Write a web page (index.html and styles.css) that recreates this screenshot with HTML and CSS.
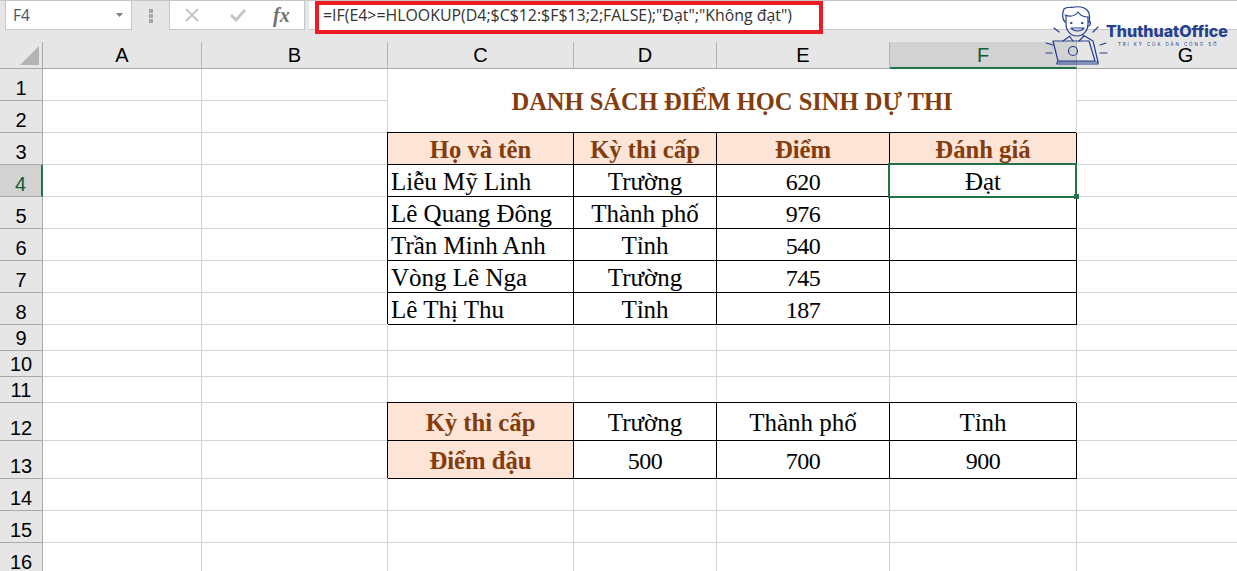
FILE: index.html
```html
<!DOCTYPE html>
<html lang="vi">
<head>
<meta charset="utf-8">
<title>Excel</title>
<link rel="stylesheet" href="styles.css">
</head>
<body>
<div class="app">
  <div class="toolbar">
    <div class="namebox"><span>F4</span><svg class="caret" width="7" height="4" viewBox="0 0 7 4"><path d="M0 0h7L3.5 4z" fill="#7f7f7f"/></svg></div>
    <div class="grip"><i></i><i></i><i></i></div>
    <div class="fnbox">
      <svg class="ic-x" width="14" height="14" viewBox="0 0 14 14"><path d="M1 1l12 12M13 1L1 13" stroke="#c4c4c4" stroke-width="1.8" fill="none"/></svg>
      <svg class="ic-ok" width="16" height="14" viewBox="0 0 16 14"><path d="M1 7l5 5L15 2" stroke="#c4c4c4" stroke-width="2.8" fill="none"/></svg>
      <span class="fx">fx</span>
    </div>
    <div class="formula"><div class="formula-text">=IF(E4&gt;=HLOOKUP(D4;$C$12:$F$13;2;FALSE);"Đạt";"Không đạt")</div></div>
  </div>
  <div class="sheet">
    <div class="corner"><svg width="19" height="19" viewBox="0 0 19 19"><path d="M19 0v19H0z" fill="#b4b4b4"/></svg></div>
    <div class="ch">A</div><div class="ch">B</div><div class="ch">C</div><div class="ch">D</div><div class="ch">E</div><div class="ch sel">F</div><div class="ch last">G</div>

    <div class="rh">1</div><div class="c"></div><div class="c"></div><div class="c title">DANH SÁCH ĐIỂM HỌC SINH DỰ THI</div><div class="c"></div>
    <div class="rh">2</div><div class="c"></div><div class="c"></div><div class="c"></div>

    <div class="rh">3</div><div class="c"></div><div class="c"></div><div class="c t h">Họ và tên</div><div class="c t h">Kỳ thi cấp</div><div class="c t h">Điểm</div><div class="c t h">Đánh giá</div><div class="c"></div>
    <div class="rh sel">4</div><div class="c"></div><div class="c"></div><div class="c t l">Liễu Mỹ Linh</div><div class="c t">Trường</div><div class="c t n">620</div><div class="c t active">Đạt<i class="handle"></i></div><div class="c"></div>
    <div class="rh">5</div><div class="c"></div><div class="c"></div><div class="c t l">Lê Quang Đông</div><div class="c t">Thành phố</div><div class="c t n">976</div><div class="c t"></div><div class="c"></div>
    <div class="rh">6</div><div class="c"></div><div class="c"></div><div class="c t l">Trần Minh Anh</div><div class="c t">Tỉnh</div><div class="c t n">540</div><div class="c t"></div><div class="c"></div>
    <div class="rh">7</div><div class="c"></div><div class="c"></div><div class="c t l">Vòng Lê Nga</div><div class="c t">Trường</div><div class="c t n">745</div><div class="c t"></div><div class="c"></div>
    <div class="rh">8</div><div class="c"></div><div class="c"></div><div class="c t l">Lê Thị Thu</div><div class="c t">Tỉnh</div><div class="c t n">187</div><div class="c t"></div><div class="c"></div>
    <div class="rh">9</div><div class="c"></div><div class="c"></div><div class="c"></div><div class="c"></div><div class="c"></div><div class="c"></div><div class="c"></div>
    <div class="rh">10</div><div class="c"></div><div class="c"></div><div class="c"></div><div class="c"></div><div class="c"></div><div class="c"></div><div class="c"></div>
    <div class="rh">11</div><div class="c"></div><div class="c"></div><div class="c"></div><div class="c"></div><div class="c"></div><div class="c"></div><div class="c"></div>
    <div class="rh">12</div><div class="c"></div><div class="c"></div><div class="c t h tall">Kỳ thi cấp</div><div class="c t tall">Trường</div><div class="c t tall">Thành phố</div><div class="c t tall">Tỉnh</div><div class="c"></div>
    <div class="rh">13</div><div class="c"></div><div class="c"></div><div class="c t h tall">Điểm đậu</div><div class="c t n tall">500</div><div class="c t n tall">700</div><div class="c t n tall">900</div><div class="c"></div>
    <div class="rh">14</div><div class="c"></div><div class="c"></div><div class="c"></div><div class="c"></div><div class="c"></div><div class="c"></div><div class="c"></div>
    <div class="rh">15</div><div class="c"></div><div class="c"></div><div class="c"></div><div class="c"></div><div class="c"></div><div class="c"></div><div class="c"></div>
    <div class="rh">16</div><div class="c"></div><div class="c"></div><div class="c"></div><div class="c"></div><div class="c"></div><div class="c"></div><div class="c"></div>
  </div>
  <div class="logo">
    <svg class="logo-art" width="64" height="64" viewBox="0 0 64 64" fill="none" stroke="#24408e" stroke-width="1.2" stroke-linecap="round" stroke-linejoin="round">
      <path d="M21 19c-3-3-3-9-1-13 3-3 7-1 11-2 6-1 12 1 14 6 1 4 1 7 0 10"/>
      <path d="M21 12c5 2 10 1 13-3 2 3 6 5 10 5"/>
      <path d="M22 13v8c0 7 5 12 11 12s11-5 11-12v-7"/>
      <path d="M45 18c2 0 2 5-1 5"/>
      <path d="M27 25c3 4 10 4 13 0z"/>
      <path d="M27 20h.5M38 20h.5" stroke-width="2"/>
      <path d="M26 33l-7 5M39 32l10 6 5 21M26 34l3 4M40 33l-5 5"/>
      <path d="M9 38h36l6 20H14z"/>
      <path d="M13 59h41v2H13z"/>
      <circle cx="29" cy="48" r="4.500"/>
      <path d="M10 25l5 4M2 40l7 2M2 50h6M49 29l5-5M56 42l6-2M56 50h7"/>
    </svg>
    <div class="logo-name">ThuthuatOffice</div>
    <div class="logo-tag">TRI KỶ CỦA DÂN CÔNG SỞ</div>
  </div>
</div>
</body>
</html>
```
FILE: styles.css
```css
* { box-sizing: border-box; }
html, body { margin: 0; padding: 0; }
body { width: 1237px; height: 571px; overflow: hidden; background: #fff; }
.app { position: relative; width: 1237px; height: 571px; overflow: hidden; }

.toolbar { height: 42px; background: #e6e6e6; border-top: 1px solid #c6c6c6; display: flex; align-items: flex-start; }
.namebox { width: 127px; height: 29px; margin-left: 5px; background: #fff; border: 1px solid #c6c6c6; border-top: 0; display: flex; align-items: center; justify-content: space-between; padding: 0 8px 0 7px; font: 15.500px "Open Sans", sans-serif; color: #44546a; }
.grip { width: 37px; height: 29px; display: flex; flex-direction: column; align-items: center; justify-content: center; gap: 1px; }
.grip i { width: 4px; height: 4px; background: #a6a6a6; }
.fnbox { width: 136px; height: 29px; background: #fff; border: 1px solid #c6c6c6; border-top: 0; display: flex; align-items: center; padding-left: 15px; }
.ic-ok { margin-left: 31px; }
.fx { font: italic bold 20px/24px "Liberation Serif", serif; color: #707070; margin-left: 27px; }
.formula { flex: 1; height: 29px; margin-left: 4px; background: #fff; border-bottom: 1px solid #c6c6c6; }
.formula-text { width: 508px; height: 33px; margin-left: 6px; padding-left: 4px; background: #fff; border: 4px solid #ed1c24; font: 15.900px/21px "Open Sans", sans-serif; color: #333; white-space: nowrap; position: relative; z-index: 1; }

.sheet { display: grid; grid-template-columns: 43px 159px 186px 186px 143px 173px 187px 218px; grid-template-rows: 27px repeat(8, 32px) 26px 26px 26px 38px 38px 32px 32px 32px; width: 1295px; }
.corner { background: #e6e6e6; border-right: 1px solid #a9a9a9; border-bottom: 1px solid #a9a9a9; display: flex; align-items: flex-end; justify-content: flex-end; padding: 0 3px 3px 0; }
.ch { background: #e6e6e6; border-right: 1px solid #b4b4b4; border-bottom: 1px solid #a9a9a9; font: 20px/27px "Liberation Sans", sans-serif; color: #000; text-align: center; }
.ch.sel { background: #d2d2d2; border-bottom: 2px solid #217346; color: #0f5c33; }
.rh { background: #e6e6e6; border-right: 1px solid #a9a9a9; border-bottom: 1px solid #a9a9a9; font: 20px/22px "Liberation Sans", sans-serif; color: #000; display: flex; align-items: flex-end; justify-content: center; padding-bottom: 1px; }
.rh.sel { background: #d2d2d2; border-right: 2px solid #217346; color: #0f5c33; }

.c { border-right: 1px solid #d4d4d4; border-bottom: 1px solid #d4d4d4; background: #fff; font: 25px/34px "Liberation Serif", serif; color: #000; white-space: nowrap; }
.title { grid-column: 4 / span 4; grid-row: 2 / span 2; border-bottom: 0; font-weight: bold; font-size: 24.500px; line-height: 65px; color: #843c0c; text-align: center; }
.t { text-align: center; border-right: 1px solid #000; border-bottom: 1px solid #000; box-shadow: -1px -1px 0 #000; }
.l { text-align: left; padding-left: 3px; }
.h { background: #fce4d6; font-weight: bold; font-size: 24.700px; color: #843c0c; }
.n { font-size: 24px; letter-spacing: -.5px; }
.tall { line-height: 40px; }
.active { position: relative; z-index: 1; }
.active::after { content: ""; position: absolute; left: -2px; top: -2px; right: -1px; bottom: -2px; border: 2px solid #217346; }
.handle { position: absolute; right: -3px; bottom: -3px; width: 5px; height: 5px; background: #217346; z-index: 1; }

.logo { position: absolute; left: 1044px; top: 0; width: 193px; height: 68px; z-index: 2; }
.logo-art { position: absolute; left: 0; top: 3px; }
.logo-name { position: absolute; left: 62px; top: 22px; font: 800 16px/18px "Inter", sans-serif; color: #24408e; white-space: nowrap; }
.logo-tag { position: absolute; left: 74px; top: 42px; font: 4.500px/6px "Inter", sans-serif; letter-spacing: 1.9px; color: #24408e; white-space: nowrap; }
```
